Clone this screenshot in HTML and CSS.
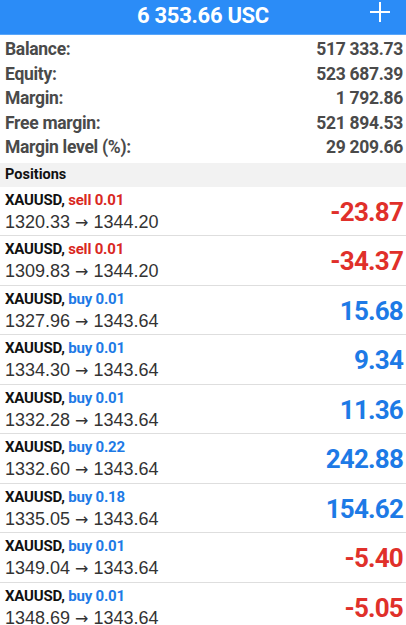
FILE: index.html
```html
<!DOCTYPE html>
<html lang="en">
<head>
    <meta charset="UTF-8">
    <meta name="viewport" content="width=device-width, initial-scale=1.0">
    <title>Trade</title>
    <link rel="stylesheet" href="styles.css">
</head>
<body>
    <div class="header">
        <div class="title">6 353.66 USC</div>
        <svg class="plus" width="22" height="22" viewBox="0 0 22 22">
            <path d="M11 1 V21 M1 11 H21" stroke="#fff" stroke-width="2" fill="none"/>
        </svg>
    </div>

    <div class="summary">
        <div class="row"><span>Balance:</span><span>517 333.73</span></div>
        <div class="row"><span>Equity:</span><span>523 687.39</span></div>
        <div class="row"><span>Margin:</span><span>1 792.86</span></div>
        <div class="row"><span>Free margin:</span><span>521 894.53</span></div>
        <div class="row"><span>Margin level (%):</span><span>29 209.66</span></div>
    </div>

    <div class="section">Positions</div>

    <div class="positions">
        <div class="position">
            <div class="info">
                <div class="symbol">XAUUSD, <span class="sell">sell 0.01</span></div>
                <div class="prices">1320.33 <span class="arrow">&rarr;</span> 1344.20</div>
            </div>
            <div class="profit loss">-23.87</div>
        </div>
        <div class="position">
            <div class="info">
                <div class="symbol">XAUUSD, <span class="sell">sell 0.01</span></div>
                <div class="prices">1309.83 <span class="arrow">&rarr;</span> 1344.20</div>
            </div>
            <div class="profit loss">-34.37</div>
        </div>
        <div class="position">
            <div class="info">
                <div class="symbol">XAUUSD, <span class="buy">buy 0.01</span></div>
                <div class="prices">1327.96 <span class="arrow">&rarr;</span> 1343.64</div>
            </div>
            <div class="profit gain">15.68</div>
        </div>
        <div class="position">
            <div class="info">
                <div class="symbol">XAUUSD, <span class="buy">buy 0.01</span></div>
                <div class="prices">1334.30 <span class="arrow">&rarr;</span> 1343.64</div>
            </div>
            <div class="profit gain">9.34</div>
        </div>
        <div class="position">
            <div class="info">
                <div class="symbol">XAUUSD, <span class="buy">buy 0.01</span></div>
                <div class="prices">1332.28 <span class="arrow">&rarr;</span> 1343.64</div>
            </div>
            <div class="profit gain">11.36</div>
        </div>
        <div class="position">
            <div class="info">
                <div class="symbol">XAUUSD, <span class="buy">buy 0.22</span></div>
                <div class="prices">1332.60 <span class="arrow">&rarr;</span> 1343.64</div>
            </div>
            <div class="profit gain">242.88</div>
        </div>
        <div class="position">
            <div class="info">
                <div class="symbol">XAUUSD, <span class="buy">buy 0.18</span></div>
                <div class="prices">1335.05 <span class="arrow">&rarr;</span> 1343.64</div>
            </div>
            <div class="profit gain">154.62</div>
        </div>
        <div class="position">
            <div class="info">
                <div class="symbol">XAUUSD, <span class="buy">buy 0.01</span></div>
                <div class="prices">1349.04 <span class="arrow">&rarr;</span> 1343.64</div>
            </div>
            <div class="profit loss">-5.40</div>
        </div>
        <div class="position">
            <div class="info">
                <div class="symbol">XAUUSD, <span class="buy">buy 0.01</span></div>
                <div class="prices">1348.69 <span class="arrow">&rarr;</span> 1343.64</div>
            </div>
            <div class="profit loss">-5.05</div>
        </div>
    </div>
</body>
</html>
```

FILE: styles.css
```css
body {
    margin: 0;
    background-color: #ffffff;
    font-family: Roboto, "Liberation Sans", Arial, sans-serif;
    overflow: hidden;
}
.header {
    position: relative;
    height: 34px;
    background-color: #2b8cf7;
    border-bottom: 1px solid #5aa6f9;
    display: flex;
    justify-content: center;
    align-items: center;
}
.title {
    color: #fff;
    font-weight: bold;
    font-size: 22px;
    letter-spacing: -0.3px;
    margin-top: -3px;
}
.plus {
    position: absolute;
    right: 15px;
    top: 1px;
}
.summary {
    padding: 2px 3px 3px 5px;
}
.row {
    display: flex;
    justify-content: space-between;
    height: 24.5px;
    align-items: center;
    font-weight: bold;
    font-size: 17.5px;
    letter-spacing: -0.3px;
    color: #4a4a4a;
}
.section {
    background-color: #f2f2f2;
    height: 24px;
    line-height: 24px;
    padding-left: 5px;
    font-weight: bold;
    font-size: 14.5px;
    color: #111;
}
.position {
    display: flex;
    justify-content: space-between;
    align-items: center;
    height: 48.5px;
    padding: 0 3px 0 5px;
    border-bottom: 1px solid #dedede;
}
.info {
    margin-top: 1px;
}
.symbol {
    font-weight: bold;
    font-size: 15px;
    letter-spacing: -0.2px;
    color: #111;
    line-height: 20px;
}
.sell {
    color: #d9281f;
}
.buy {
    color: #1d7ae6;
}
.prices {
    font-family: "Liberation Sans", Arial, sans-serif;
    font-size: 18px;
    color: #333;
    line-height: 20px;
    margin-top: 2px;
}
.arrow {
    font-family: "DejaVu Sans", sans-serif;
    font-size: 16px;
}
.profit {
    font-weight: bold;
    font-size: 26px;
    letter-spacing: -0.8px;
    margin-top: 2px;
}
.loss {
    color: #e0302a;
}
.gain {
    color: #1d7ae6;
}
```
